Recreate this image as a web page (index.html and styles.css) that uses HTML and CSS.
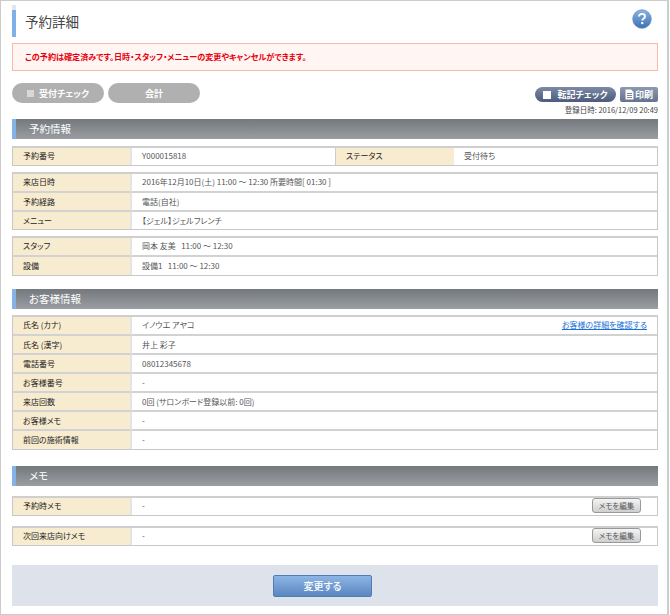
FILE: index.html
```html
<!DOCTYPE html>
<html lang="ja">
<head>
<meta charset="utf-8">
<title>予約詳細</title>
<link rel="stylesheet" href="styles.css">
</head>
<body>
<main class="page">
  <header class="title-row">
    <h1 class="title">予約詳細</h1>
    <svg class="help" width="20" height="20" viewBox="0 0 20 20" aria-label="ヘルプ">
      <defs><linearGradient id="hg" x1="0" y1="0" x2="0" y2="1"><stop offset="0" stop-color="#8db4e2"/><stop offset="1" stop-color="#3c6fb0"/></linearGradient></defs>
      <circle cx="10" cy="10" r="9.3" fill="url(#hg)" stroke="#5f8cc4" stroke-width=".7"/>
      <path d="M7 7.600c0-1.800 1.300-2.700 3-2.700s3 .9 3 2.500c0 1.200-.7 1.800-1.600 2.400-.8.5-1.100.9-1.100 1.800" fill="none" stroke="#fff" stroke-width="1.900"/>
      <rect x="9.200" y="13" width="2.100" height="2.100" fill="#fff"/>
    </svg>
  </header>

  <p class="alert">この予約は確定済みです。日時・スタッフ・メニューの変更やキャンセルができます。</p>

  <div class="actions">
    <div class="action-left">
      <span class="pill"><i class="box"></i>受付チェック</span>
      <span class="pill">会計</span>
    </div>
    <div class="action-right">
      <div class="action-btns">
        <span class="navy navy-pill"><i class="box box-white"></i>転記チェック</span>
        <span class="navy navy-print">
          <svg width="9" height="11" viewBox="0 0 9 11"><path d="M.5.5h5.500l2.500 2.500v7.500h-8z" fill="#fff"/><path d="M2 4.500h5M2 6.500h5M2 8.500h5" stroke="#667" stroke-width=".8"/></svg>印刷
        </span>
      </div>
      <div class="stamp">登録日時: 2016/12/09 20:49</div>
    </div>
  </div>

  <h2 class="section first">予約情報</h2>
  <table class="info tight top-gap">
    <tr>
      <th>予約番号</th><td class="w-a">Y000015818</td>
      <th class="th2">ステータス</th><td>受付待ち</td>
    </tr>
  </table>
  <table class="info tight gap-s">
    <tr><th>来店日時</th><td>2016年12月10日(土) 11:00 ～ 12:30 所要時間[ 01:30 ]</td></tr>
    <tr><th>予約経路</th><td>電話(自社)</td></tr>
    <tr><th>メニュー</th><td>【ジェル】ジェルフレンチ</td></tr>
  </table>
  <table class="info gap-s">
    <tr><th>スタッフ</th><td>岡本 友美 &nbsp; 11:00 ～ 12:30</td></tr>
    <tr><th>設備</th><td>設備1 &nbsp; 11:00 ～ 12:30</td></tr>
  </table>

  <h2 class="section">お客様情報</h2>
  <table class="info gap-s">
    <tr><th>氏名 (カナ)</th><td><div class="split">イノウエ アヤコ<a class="link" href="#">お客様の詳細を確認する</a></div></td></tr>
    <tr><th>氏名 (漢字)</th><td>井上 彩子</td></tr>
    <tr><th>電話番号</th><td>08012345678</td></tr>
    <tr><th>お客様番号</th><td>-</td></tr>
    <tr><th>来店回数</th><td>0回 (サロンボード登録以前: 0回)</td></tr>
    <tr><th>お客様メモ</th><td>-</td></tr>
    <tr><th>前回の施術情報</th><td>-</td></tr>
  </table>

  <h2 class="section wide">メモ</h2>
  <table class="info tight gap-m">
    <tr><th>予約時メモ</th><td><div class="split">-<span class="edit">メモを編集</span></div></td></tr>
  </table>
  <table class="info tight gap-m">
    <tr><th>次回来店向けメモ</th><td><div class="split">-<span class="edit">メモを編集</span></div></td></tr>
  </table>

  <div class="footer"><span class="submit">変更する</span></div>
</main>
</body>
</html>
```
FILE: styles.css
```css
* { box-sizing: border-box; }
html, body { margin: 0; padding: 0; background: #fff; }
body {
  width: 670px;
  height: 615px;
  overflow: hidden;
  font-family: "Noto Sans CJK JP", "Liberation Sans", sans-serif;
  font-size: 8px;
  font-feature-settings: "palt";
  color: #444;
}
.page {
  width: 669px;
  height: 615px;
  border: 1px solid #ccc;
  border-width: 1px 2px 1px 1px;
  padding: 4px 9px 0 11px;
}
.title-row {
  display: flex;
  justify-content: space-between;
  align-items: flex-start;
  height: 31px;
}
.title {
  margin: 0;
  height: 32px;
  padding-left: 9px;
  line-height: 33px;
  font-size: 13.500px;
  font-weight: 400;
  color: #444;
  border-left: 4px solid;
  border-image: linear-gradient(#dfe6f0 0, #dfe6f0 18%, #7fb0e8 18%, #7fb0e8 100%) 1;
}
.help { margin: 4px 6px 0 0; }
.alert {
  margin: 7px 0 0;
  height: 28px;
  line-height: 26px;
  padding-left: 12px;
  background: #fff6f3;
  border: 1px solid #f8b8ab;
  color: #e8000c;
  font-weight: 700;
  font-size: 8.100px;
}
.actions {
  display: flex;
  justify-content: space-between;
  margin-top: 12px;
  height: 36px;
}
.action-left { display: flex; gap: 4px; }
.pill {
  width: 92px;
  height: 20px;
  border-radius: 10px;
  background: #b0b0b0;
  color: #fff;
  font-weight: 700;
  font-size: 9px;
  display: flex;
  align-items: center;
  justify-content: center;
  gap: 5px;
}
.box { width: 7px; height: 7px; background: #d8d8d8; display: block; }
.box-white { width: 8px; height: 8px; background: #fff; }
.action-right { display: flex; flex-direction: column; align-items: flex-end; padding-top: 4px; }
.action-btns { display: flex; gap: 4px; }
.navy {
  height: 15px;
  background: linear-gradient(#7c8aa6, #4d5b7c);
  color: #fff;
  font-weight: 700;
  font-size: 9px;
  display: flex;
  align-items: center;
  justify-content: center;
}
.navy-pill { width: 81px; border-radius: 8px; gap: 6px; }
.navy-print { width: 38px; border-radius: 2px; gap: 1px; background: linear-gradient(#8d99b0, #65738f); }
.stamp { margin-top: 2px; font-size: 7.500px; line-height: 12px; white-space: nowrap; }
.section {
  margin: 13px 0 0;
  height: 20px;
  padding-left: 13px;
  line-height: 19px;
  font-size: 10.500px;
  font-weight: 400;
  color: #fff;
  background: linear-gradient(#74797e, #9a9da1);
  border-left: 4px solid #84b3e8;
}
.section.first { margin-top: 0; }
.section.wide { margin-top: 16px; }
.info {
  width: 100%;
  border-collapse: separate;
  border-spacing: 0;
  table-layout: fixed;
  border: 1px solid #c8c8c8;
  border-top: 2px solid #cfcfcf;
  background: #fff;
}
.top-gap { margin-top: 7px; }
.gap-s { margin-top: 6px; }
.gap-m { margin-top: 10px; }
.info th, .info td {
  height: 19px;
  padding: 0 10px;
  border-bottom: 2px solid #d2d2d2;
  line-height: 12px;
  text-align: left;
  font-weight: 400;
  white-space: nowrap;
}
.info tr:first-child th, .info tr:first-child td { padding-bottom: 2px; }
.info tr:last-child th, .info tr:last-child td { border-bottom: 0; height: 18px; }
.info.tight tr:last-child th, .info.tight tr:last-child td { height: 17px; }
.info th {
  width: 119px;
  background: #f8ecd0;
  border-right: 2px solid #e4e4e4;
  color: #222;
}
.info .th2 { width: 119px; border-left: 1px solid #ccc; border-right: 0; }
.info .w-a { width: 203px; }
.info td { color: #555; }
.split { display: flex; justify-content: space-between; align-items: center; }
.link { color: #1a6fd8; text-decoration: underline; }
.edit {
  width: 49px;
  height: 15px;
  margin-right: 6px;
  border: 1px solid #999;
  border-radius: 3px;
  background: linear-gradient(#f4f4f4, #cfcfcf);
  font-size: 7.500px;
  line-height: 13px;
  text-align: center;
  color: #555;
}
.footer {
  margin-top: 19px;
  height: 41px;
  background: #dee2ea;
  padding: 10px 0 0 261px;
}
.submit {
  display: block;
  width: 99px;
  height: 22px;
  border-radius: 2px;
  border: 1px solid #4f7db5;
  background: linear-gradient(#8db5e6, #5a86bf);
  color: #fff;
  font-size: 10px;
  font-weight: 500;
  line-height: 20px;
  text-align: center;
}
```
